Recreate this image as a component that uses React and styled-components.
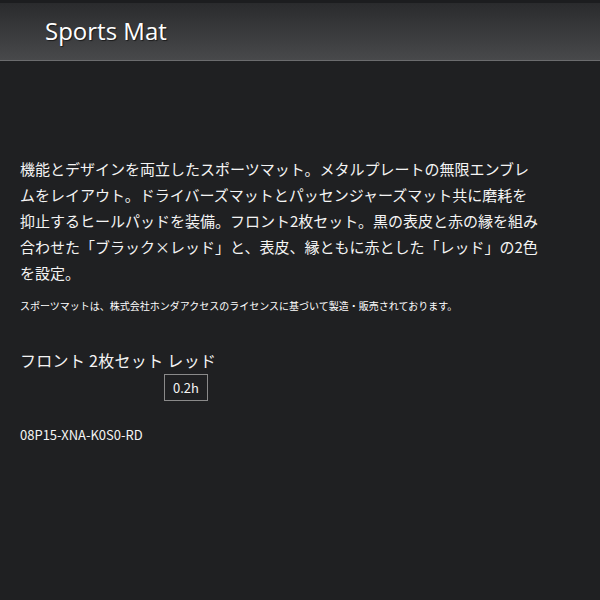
import React from 'react';
import styled, { createGlobalStyle } from 'styled-components';

const GlobalStyle = createGlobalStyle`
  html, body {
    margin: 0;
    padding: 0;
    background-color: #1f2022;
  }
  body {
    font-family: 'Noto Sans CJK JP', 'Noto Sans', sans-serif;
    color: #f4f4f4;
  }
`;

const Page = styled.div`
  width: 600px;
  min-height: 600px;
  background-color: #1f2022;
`;

const Header = styled.header`
  height: 57px;
  border-top: 3px solid #1c1d1f;
  border-bottom: 1px solid #6b6c6e;
  background: linear-gradient(to bottom, #2a2b2d 0%, #48494b 100%);
  display: flex;
  align-items: center;
  padding-left: 45px;
`;

const Title = styled.h1`
  margin: 0;
  font-family: 'Open Sans', 'Liberation Sans', sans-serif;
  font-weight: 400;
  font-size: 24px;
  color: #ffffff;
  text-shadow: 1px 1px 1px rgba(0, 0, 0, 0.6);
  margin-top: -2px;
`;

const Content = styled.main`
  padding: 95px 20px 0 20px;
  display: flex;
  flex-direction: column;
  align-items: flex-start;
`;

const Description = styled.p`
  margin: 0;
  width: 522px;
  font-size: 15px;
  line-height: 26px;
  color: #f4f4f4;
`;

const Note = styled.p`
  margin: 13px 0 0 0;
  font-size: 10px;
  line-height: 14px;
  color: #ffffff;
`;

const ItemName = styled.h2`
  margin: 35px 0 0 0;
  font-weight: 400;
  font-size: 16px;
  letter-spacing: 0.3px;
  line-height: 24px;
  color: #f4f4f4;
`;

const HourBox = styled.div`
  margin: 2px 0 0 144px;
  width: 42px;
  height: 25px;
  border: 1px solid #8a8a8a;
  display: flex;
  align-items: center;
  justify-content: center;
  font-size: 13px;
  color: #f4f4f4;
`;

const PartNo = styled.div`
  margin-top: 24px;
  font-size: 13px;
  color: #f4f4f4;
`;

export default function App() {
    return (
        <Page>
            <GlobalStyle />
            <Header>
                <Title>Sports Mat</Title>
            </Header>
            <Content>
                <Description>
                    機能とデザインを両立したスポーツマット。メタルプレートの無限エンブレムをレイアウト。ドライバーズマットとパッセンジャーズマット共に磨耗を抑止するヒールパッドを装備。フロント2枚セット。黒の表皮と赤の縁を組み合わせた「ブラック×レッド」と、表皮、縁ともに赤とした「レッド」の2色を設定。
                </Description>
                <Note>スポーツマットは、株式会社ホンダアクセスのライセンスに基づいて製造・販売されております。</Note>
                <ItemName>フロント 2枚セット レッド</ItemName>
                <HourBox>0.2h</HourBox>
                <PartNo>08P15-XNA-K0S0-RD</PartNo>
            </Content>
        </Page>
    );
};
